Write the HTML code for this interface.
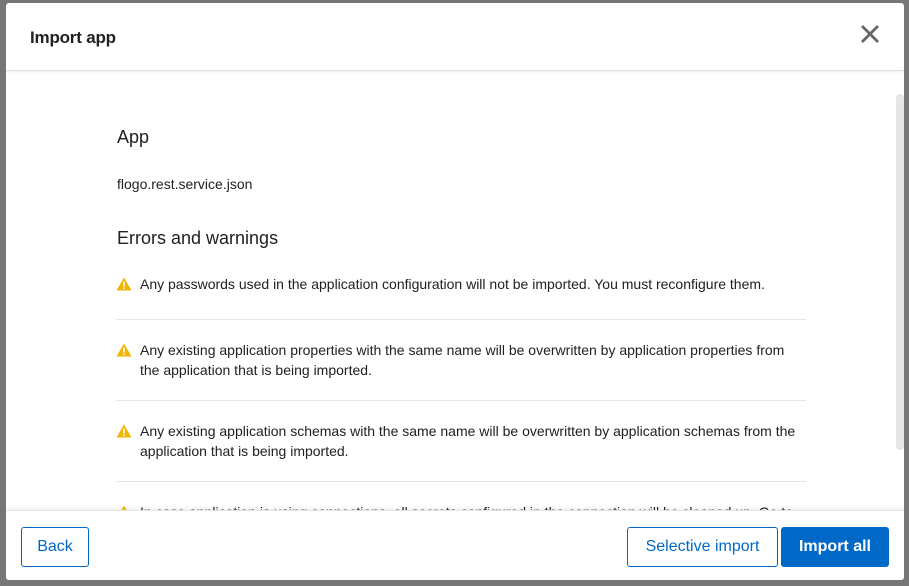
<!DOCTYPE html>
<html><head><style>
*{box-sizing:border-box;margin:0;padding:0}
body{width:909px;height:586px;background:#767676;font-family:"Liberation Sans",sans-serif;position:relative;overflow:hidden}
.dlg{position:absolute;left:6px;top:3px;width:898px;height:577px;background:#fff;border-radius:3px;overflow:hidden}
.hdr{position:absolute;left:0;top:0;width:100%;height:68px;border-bottom:1px solid #e0e0e0;box-shadow:0 1px 3px rgba(0,0,0,.08)}
.hdr h1{position:absolute;left:24px;top:25px;font-size:17px;font-weight:bold;color:#212121;letter-spacing:-.2px}
.x{position:absolute;left:853px;top:20px}
.sb{position:absolute;left:890px;top:91px;width:8px;height:356px;background:#e6e6e6;border-radius:4px}
.body{position:absolute;left:110px;top:68px;width:690px}
h2{font-size:18px;font-weight:normal;color:#212121;position:absolute}
.t{font-size:14px;color:#212121;position:absolute;line-height:20px}
.w{position:absolute;left:0;width:690px;font-size:14px;color:#212121;line-height:20px;padding-left:24px}
.w svg{position:absolute;left:0;top:3px}
.hr{position:absolute;left:0;width:690px;height:1px;background:#e6e6e6}
.ftr{position:absolute;left:0;top:507px;width:100%;height:70px;background:#fff;border-top:1px solid #e4e4e4;box-shadow:0 -2px 4px rgba(0,0,0,.06)}
.btn{position:absolute;top:16px;height:40px;border:1px solid #0069c7;border-radius:3px;font-size:16px;color:#0069c7;display:flex;align-items:center;justify-content:center;background:#fff}
</style></head><body>
<div class="dlg">
<div class="body">
<h2 style="top:56px;left:1px">App</h2>
<div class="t" style="top:103px;left:1px">flogo.rest.service.json</div>
<h2 style="top:157px;left:1px">Errors and warnings</h2>
<div class="w" style="top:203px"><svg width="16" height="14" viewBox="0 0 16 14"><path d="M8 0.5L15.5 13.5H0.5Z" fill="#f5b400"/><rect x="7.2" y="4.5" width="1.6" height="5" fill="#fff"/><rect x="7.2" y="10.5" width="1.6" height="1.6" fill="#fff"/></svg>Any passwords used in the application configuration will not be imported. You must reconfigure them.</div>
<div class="hr" style="top:248px"></div>
<div class="w" style="top:269px"><svg width="16" height="14" viewBox="0 0 16 14"><path d="M8 0.5L15.5 13.5H0.5Z" fill="#f5b400"/><rect x="7.2" y="4.5" width="1.6" height="5" fill="#fff"/><rect x="7.2" y="10.5" width="1.6" height="1.6" fill="#fff"/></svg>Any existing application properties with the same name will be overwritten by application properties from the application that is being imported.</div>
<div class="hr" style="top:329px"></div>
<div class="w" style="top:350px"><svg width="16" height="14" viewBox="0 0 16 14"><path d="M8 0.5L15.5 13.5H0.5Z" fill="#f5b400"/><rect x="7.2" y="4.5" width="1.6" height="5" fill="#fff"/><rect x="7.2" y="10.5" width="1.6" height="1.6" fill="#fff"/></svg>Any existing application schemas with the same name will be overwritten by application schemas from the application that is being imported.</div>
<div class="hr" style="top:410px"></div>
<div class="w" style="top:431px"><svg width="16" height="14" viewBox="0 0 16 14"><path d="M8 0.5L15.5 13.5H0.5Z" fill="#f5b400"/><rect x="7.2" y="4.5" width="1.6" height="5" fill="#fff"/><rect x="7.2" y="10.5" width="1.6" height="1.6" fill="#fff"/></svg>In case application is using connections, all secrets configured in the connection will be cleaned up. Go to</div>
</div>
<div class="sb"></div>
<div class="hdr"><h1>Import app</h1>
<svg class="x" width="22" height="22" viewBox="0 0 22 22"><path d="M3 3L19 19M19 3L3 19" stroke="#666" stroke-width="2.8"/></svg></div>
<div class="ftr">
<div class="btn" style="left:15px;width:68px">Back</div>
<div class="btn" style="left:621px;width:151px">Selective import</div>
<div class="btn" style="left:775px;width:108px;background:#0069c7;color:#fff;font-weight:bold">Import all</div>
</div>
</div>
</body></html>
